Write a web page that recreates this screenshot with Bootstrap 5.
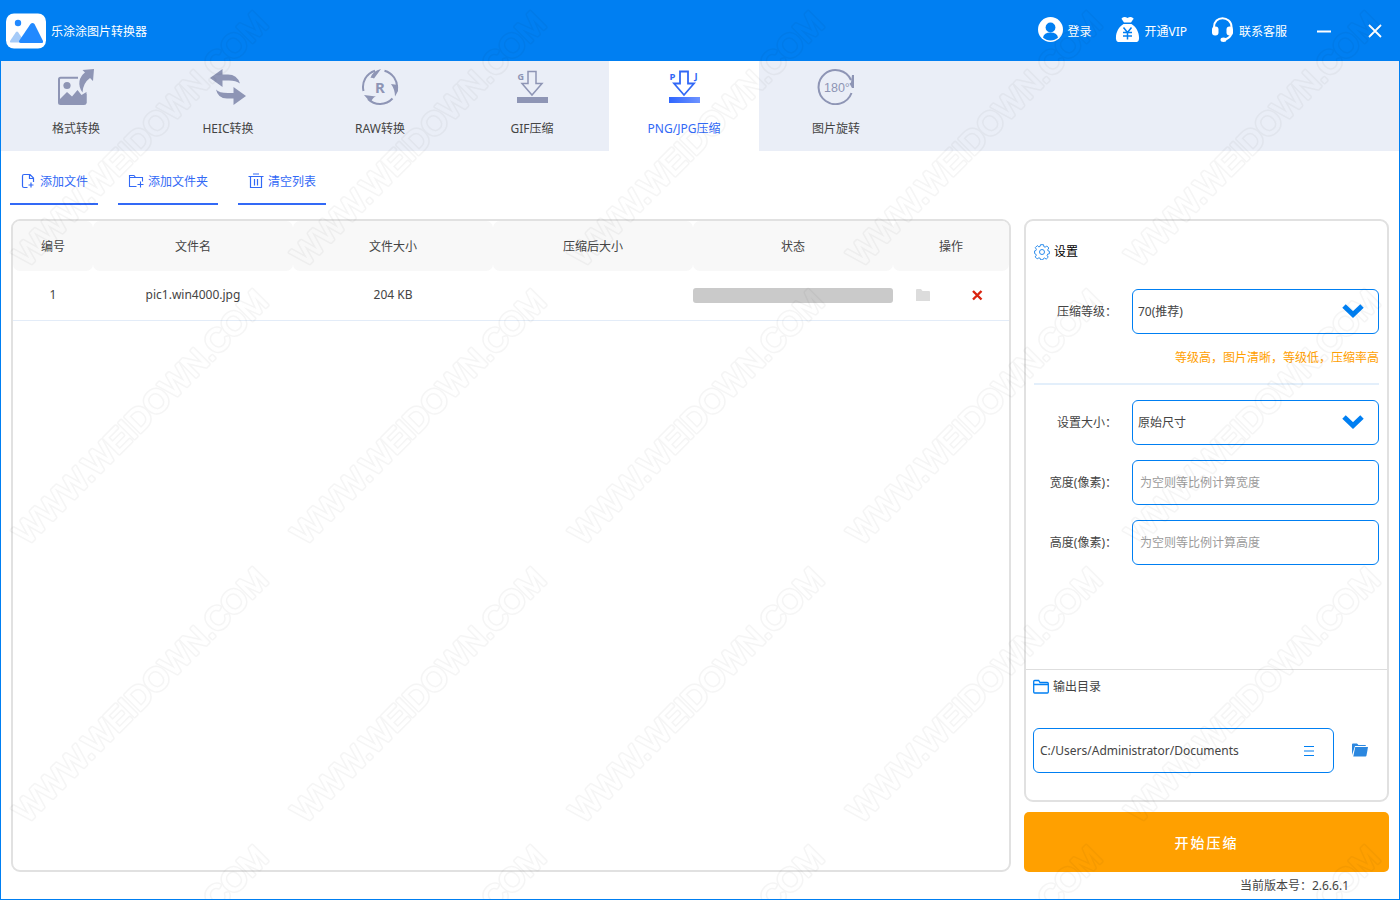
<!DOCTYPE html>
<html lang="zh-CN">
<head>
<meta charset="utf-8">
<meta name="viewport" content="width=device-width, initial-scale=1">
<title>乐涂涂图片转换器</title>
<link href="https://cdn.jsdelivr.net/npm/bootstrap@5.3.0/dist/css/bootstrap.min.css" rel="stylesheet">
<style>
  :root { --brand: #007ff2; --accent: #3269f6; --mute: #8e95b5; }
  body { font: 12px/18px "Noto Sans", "Noto Sans CJK SC", sans-serif; color: #444; background: #fff; }
  button, input, select { font: inherit; color: inherit; }
  svg { display: block; flex: none; }
  .app-window { min-height: 100vh; border: 1px solid var(--brand); border-top: 0; }
  .title-bar { background: var(--brand); height: 61px; padding: 0 17px 0 5px; }
  .title-bar a, .title-bar button { color: #fff; text-decoration: none; }
  .title-bar a span, .app-name, .tool-btn span { padding-top: 2px; }
  .app-name { font-size: 12px; line-height: 18px; margin: 0 auto 0 5px; font-weight: 400; color: #fff; }
  .min-btn { margin: 0 21px 0 14px; }
  .bare { background: none; border: 0; padding: 0; }
  .tab-strip { background: #eaeef7; height: 90px; gap: 2px; }
  .tab-strip .nav-link { width: 150px; padding: 8px 0 0; color: #444; border-radius: 0; gap: 15px; height: 90px; }
  .tab-strip .nav-link svg { color: var(--mute); }
  .tab-strip .nav-link.active { background: #fff; color: var(--accent); }
  .tool-row { padding: 8px 9px 0; gap: 20px; }
  .tool-btn { color: var(--accent); border-bottom: 2px solid var(--accent); height: 46px; padding: 0 10px; gap: 4px; }
  .work-area { padding: 14px 10px 0; gap: 13px; }
  .panel { border: 2px solid #e1e1e1; border-radius: 9px; }
  .list-panel { margin-bottom: 27px; }
  .file-table { table-layout: fixed; width: 100%; text-align: center; }
  .file-table th { font-weight: 400; height: 50px; background: #f8f8f8; border-radius: 7px; padding: 2px 0 0; }
  .file-table td { height: 49px; border-bottom: 1px solid #e3ecf8; padding: 0; }
  .row-actions { padding: 0 25px 0 23px; }
  .file-progress { height: 15px; border-radius: 3px; background: #cacaca; }
  .side { width: 365px; flex: none; }
  .side-title { font-size: 12px; line-height: 18px; padding: 22px 0 28px; margin: 0; font-weight: 400; color: #000; }
  .field-grid { display: grid; grid-template-columns: 98px 1fr; row-gap: 15px; align-items: center; }
  .field-grid label { text-align: right; padding-right: 15px; }
  .field { height: 45px; border: 1px solid var(--brand); border-radius: 6px; padding: 0 7px; width: 100%; background-color: #fff; box-shadow: none; }
  .field::placeholder { color: #9b9b9b; opacity: 1; }
  select.field { appearance: none; padding: 0 40px 0 5px; background-repeat: no-repeat; background-position: right 14px center;
    background-image: url("data:image/svg+xml,%3Csvg xmlns='http://www.w3.org/2000/svg' width='22' height='17' viewBox='0 0 22 17'%3E%3Cpath d='M2 3l9 8.5 9-8.500' fill='none' stroke='%23007ff2' stroke-width='5'/%3E%3C/svg%3E"); }
  .hint { color: #ffa000; margin: 0; padding: 15px 0 16px; }
  .rule { height: 2px; background: #e3effb; margin-bottom: 15px; }
  .output-box { border-top: 1px solid #dedede; padding: 8px 7px 27px; }
  .output-row { margin-top: 32px; }
  .path-input { min-width: 0; margin-left: 6px; }
  .menu-btn { padding: 0 19px; }
  .browse-btn { padding: 0 12px 2px 18px; }
  .start-btn { background: #ffa000; color: #fff; border: 0; border-radius: 5px; height: 60px; font-size: 14px; font-weight: 500; letter-spacing: 2px; margin-top: 10px; padding-top: 3px; }
  .version { padding: 5px 40px 0 0; height: 27px; }
  .watermark { position: absolute; inset: 0; width: 100%; height: 100%; pointer-events: none; }
</style>
</head>
<body>
<div class="app-window d-flex flex-column position-relative">
  <header class="title-bar d-flex align-items-center">
    <svg width="40" height="36" viewBox="0 0 40 36"><rect width="40" height="35" y=".5" rx="8" fill="#fff"/><circle cx="12" cy="10" r="3.200" fill="#2189ff"/><path d="M4 28l6-9q1-1 2 0l6 9q0 1.500-1 1.500H5q-1.500 0-1-1.500z" fill="#a6cbf8"/><path d="M13 28l11.500-17q2-2 4 0L37 28q.5 2-1 2H14.500q-2-.3-1.500-2z" fill="#2189ff"/></svg>
    <h1 class="app-name">乐涂涂图片转换器</h1>
    <nav class="d-flex align-items-center">
      <a href="#" class="d-flex align-items-center gap-1 me-4">
        <svg width="25" height="28" viewBox="0 0 25 28"><circle cx="12.500" cy="12.500" r="12.500" fill="#fff"/><circle cx="12.500" cy="10.500" r="4.900" fill="#007ff2"/><path d="M5 20.500q1-5 7.500-5t7.500 5q-3 3-7.500 3t-7.500-3z" fill="#007ff2"/></svg><span>登录</span></a>
      <a href="#" class="d-flex align-items-center gap-1 me-4">
        <svg width="25" height="28" viewBox="0 0 25 28"><path d="M7 1q2.500-2 5.500 0 3-2 5.500 0 1 .5 0 1.500L16 5.500H9L7 2.500Q6.300 1.600 7 1zM8.500 7h8c5 3 8 9 7.500 15q-.3 3-2 3H3q-1.700 0-2-3C.5 16 3.500 10 8.500 7z" fill="#fff"/><path d="M8.500 10.500l4 5 4-5M12.500 15v7.500M8 15.500h9M8 19h9" fill="none" stroke="#007ff2" stroke-width="1.500"/></svg><span>开通VIP</span></a>
      <a href="#" class="d-flex align-items-center gap-1">
        <svg width="24" height="28" viewBox="0 0 24 28"><path d="M3 11v-1C3 4.500 7 1.200 11.500 1.200S20.500 4.500 20.500 10v1M20.500 16q-1 5.500-7.500 6.500" fill="none" stroke="#fff" stroke-width="2"/><rect x="1" y="9.500" width="6.500" height="9" rx="3" fill="#fff"/><rect x="15.500" y="9.500" width="6.500" height="9" rx="3" fill="#fff"/><ellipse cx="12.500" cy="22.800" rx="3" ry="2.200" fill="#fff"/></svg><span>联系客服</span></a>
    </nav>
    <button class="bare px-3 min-btn" aria-label="最小化"><svg width="14" height="14"><path d="M0 7.500h14" stroke="#fff" stroke-width="2"/></svg></button>
    <button class="bare" aria-label="关闭"><svg width="14" height="14"><path d="M1 1l12 12M13 1L1 13" stroke="#fff" stroke-width="1.800"/></svg></button>
  </header>

  <nav class="tab-strip nav flex-nowrap">
    <a href="#" class="nav-link d-flex flex-column align-items-center">
      <svg width="38" height="36" viewBox="0 0 38 36" fill="currentColor"><path d="M21 8.800H3.500Q2 8.800 2 10.500V33.500Q2 35 3.500 35H27q1.500 0 1.500-1.500V25" fill="none" stroke="currentColor" stroke-width="2"/><circle cx="10" cy="16.500" r="3.600"/><path d="M2 31l8-8 5 4.500 5.500-6.500 4 5 5-3v11l-1 1H3z"/><path d="M25.500 1L37 0 36 12l-3-3q-7 5-7.500 14.500Q21.500 18 22.500 12q1-5 5.500-8.500z"/></svg>格式转换</a>
    <a href="#" class="nav-link d-flex flex-column align-items-center">
      <svg width="36" height="36" viewBox="0 0 36 36" fill="currentColor"><path d="M0 9L12.500 0v5.500H18q9 0 12 9-4-3-11-3h-6.500V18zM36 27L23.500 18v6H18Q9 24 6 20.500q2 9.500 12 9h5.500V36z"/></svg>HEIC转换</a>
    <a href="#" class="nav-link d-flex flex-column align-items-center">
      <svg width="38" height="36" viewBox="0 0 38 36" fill="currentColor"><path d="M2.500 22A17 17 0 0 1 14 1.700M23.500 1.700A17 17 0 0 1 36 20M31.500 29.500A17 17 0 0 1 7 30" fill="none" stroke="currentColor" stroke-width="2"/><path d="M9.500 9Q12 1.500 20 0L13 9.500q-2-1.200-3.500-.5zM30 15l7 1v6l-3 5.500q0-7-4-12.500zM3 26l12 1.500q-3 .5-4.500 4.500-5-2-7.500-6z"/><text x="19" y="24" font-size="15" font-weight="700" text-anchor="middle">R</text></svg>RAW转换</a>
    <a href="#" class="nav-link d-flex flex-column align-items-center">
      <svg width="38" height="36" viewBox="0 0 38 36" fill="currentColor"><path d="M15 2.500h8v12h6l-10 11.500L9 14.500h6z" fill="none" stroke="currentColor" stroke-width="1.500"/><rect x="4" y="28" width="31" height="6"/><text x="4.500" y="11" font-size="9" font-weight="700">G</text></svg>GIF压缩</a>
    <a href="#" class="nav-link active d-flex flex-column align-items-center" aria-current="page">
      <svg width="38" height="36" viewBox="0 0 38 36" fill="#3269f6"><defs><linearGradient id="bar"><stop stop-color="#2f66ff"/><stop offset="1" stop-color="#6e93ff"/></linearGradient></defs><path d="M15 2.500h8v12h6l-10 11.500L9 14.500h6z" fill="none" stroke="#3269f6" stroke-width="1.800"/><rect x="4" y="28" width="31" height="6" fill="url(#bar)"/><text x="4.500" y="11" font-size="9.500" font-weight="700">P</text><text x="29.500" y="10" font-size="9.500" font-weight="700">J</text></svg>PNG/JPG压缩</a>
    <a href="#" class="nav-link d-flex flex-column align-items-center">
      <svg width="38" height="36" viewBox="0 0 38 36" fill="currentColor"><path d="M34.500 24A17 17 0 1 1 34 11" fill="none" stroke="currentColor" stroke-width="2"/><path d="M35 6h2v13h-2l-2.500-4.500 1.500-1z"/><text x="7" y="23" font-size="12.500" font-family="Liberation Sans">180°</text></svg>图片旋转</a>
  </nav>

  <div class="tool-row d-flex">
    <button class="bare tool-btn d-flex align-items-center"><svg width="16" height="16" viewBox="0 0 16 16" fill="none" stroke="currentColor" stroke-width="1.200"><path d="M7.500 14.500H4q-1.500 0-1.500-1.500V3q0-1.500 1.500-1.500h6L13.500 5v4M9.500 1.500v4h4M11 9.500v5M8.500 12h5"/></svg><span>添加文件</span></button>
    <button class="bare tool-btn d-flex align-items-center"><svg width="16" height="16" viewBox="0 0 16 16" fill="none" stroke="currentColor" stroke-width="1.100"><path d="M8.500 13.500h-7V2.500H6L7.500 4.500h7v4M1.500 4.500H8M12.500 8.500v6M9.500 11.500h6"/></svg><span>添加文件夹</span></button>
    <button class="bare tool-btn d-flex align-items-center"><svg width="16" height="16" viewBox="0 0 16 16" fill="none" stroke="currentColor" stroke-width="1.200"><path d="M5 1h6M.5 3.500h15M2.500 3.500v11h11v-11M6.500 6v6.500M9.500 6v6.500"/></svg><span>清空列表</span></button>
  </div>

  <main class="work-area d-flex flex-fill">
    <section class="panel list-panel flex-fill">
      <table class="file-table">
        <colgroup><col style="width:80px"><col><col><col><col><col style="width:116px"></colgroup>
        <thead><tr><th>编号</th><th>文件名</th><th>文件大小</th><th>压缩后大小</th><th>状态</th><th>操作</th></tr></thead>
        <tbody><tr><td>1</td><td>pic1.win4000.jpg</td><td>204 KB</td><td></td>
          <td><div class="file-progress" role="progressbar" aria-label="压缩进度"></div></td>
          <td><div class="row-actions d-flex justify-content-between">
            <button class="bare" aria-label="打开文件夹"><svg width="14" height="14"><path d="M0 2q0-1 1-1h4l1.500 2H13q1 0 1 1v9H0z" fill="#dcdcdc"/></svg></button>
            <button class="bare" aria-label="删除"><svg width="14" height="14"><path d="M3 3l8.500 8.500M11.500 3L3 11.500" stroke="#d9230f" stroke-width="2.400"/></svg></button></div></td></tr></tbody>
      </table>
    </section>

    <aside class="side d-flex flex-column">
      <section class="panel flex-fill d-flex flex-column">
        <div class="px-2 flex-fill">
          <h2 class="side-title d-flex align-items-center gap-1"><svg width="16" height="16" viewBox="0 0 16 16" fill="none" stroke="#2b8ced"><path d="M6.500.7h3l.4 2 1.200.5 1.700-1.200 2 2-1.100 1.800.5 1.200 1.200.3v2.400l-1.700.4-.6 1.300 1.100 1.800-2 1.900-1.700-1.100-1.100.5-.4 1.300H6.600l-.4-1.500-1.300-.5-1.700 1.100-2-2 1.100-1.600-.5-1.200L.6 9.500V6.900l1.300-.4.500-1.200-1.100-1.700 2-2L4.900 2.900l1.200-.5z"/><circle cx="8" cy="8" r="2.500"/></svg>设置</h2>
          <div class="field-grid">
            <label for="level">压缩等级：</label>
            <select id="level" class="field"><option>70(推荐)</option></select>
          </div>
          <p class="hint text-end text-nowrap">等级高，图片清晰，等级低，压缩率高</p>
          <div class="rule"></div>
          <div class="field-grid">
            <label for="size">设置大小：</label>
            <select id="size" class="field"><option>原始尺寸</option></select>
            <label for="w">宽度(像素)：</label>
            <input id="w" class="field" type="text" placeholder="为空则等比例计算宽度">
            <label for="h">高度(像素)：</label>
            <input id="h" class="field" type="text" placeholder="为空则等比例计算高度">
          </div>
        </div>
        <div class="output-box">
          <label for="out" class="d-flex align-items-center gap-1"><svg width="16" height="16" viewBox="0 0 16 16" fill="none" stroke="#007ff2" stroke-width="1.300"><path d="M.7 13V2.500q0-1 1-1h4L7 3.500h7.300q1 0 1 1V13q0 1-1 1H1.700q-1 0-1-1M.7 5.500h14.600"/></svg>输出目录</label>
          <div class="output-row d-flex align-items-center">
            <div class="field d-flex align-items-center flex-fill px-0">
              <input id="out" class="bare path-input flex-fill" type="text" value="C:/Users/Administrator/Documents">
              <button class="bare menu-btn" aria-label="历史目录"><svg width="10" height="12"><path d="M0 1.500h10M0 6h10M0 10.500h10" stroke="#007ff2" stroke-width="1.200"/></svg></button>
            </div>
            <button class="bare browse-btn" aria-label="浏览"><svg width="16" height="14" viewBox="0 0 16 14" fill="#2b87df"><path d="M0 12V1.500q0-1 1-1h4L6.500 2H13q1 0 1 1H3z"/><path d="M3.200 4H16l-1.500 8.500q-.2 1-1 1H1.300z"/></svg></button>
          </div>
        </div>
      </section>
      <button class="start-btn w-100">开始压缩</button>
      <div class="version text-end">当前版本号：2.6.6.1</div>
    </aside>
  </main>

  <svg class="watermark" aria-hidden="true">
    <defs>
      <mask id="ring" maskUnits="userSpaceOnUse" x="-10" y="-40" width="380" height="60">
        <g font-family="Liberation Sans" font-size="32" stroke-linejoin="round">
          <text fill="#fff" stroke="#fff" stroke-width="4">WWW.WEIDOWN.COM</text>
          <text fill="#000" stroke="#000" stroke-width="1">WWW.WEIDOWN.COM</text>
        </g>
      </mask>
      <pattern id="wm" width="278" height="278" patternUnits="userSpaceOnUse">
        <g transform="translate(26 268) rotate(-45)"><rect x="-10" y="-40" width="380" height="60" fill="#000" fill-opacity=".038" mask="url(#ring)"/></g>
      </pattern>
    </defs>
    <rect width="100%" height="100%" fill="url(#wm)"/>
  </svg>
</div>
<script src="https://cdn.jsdelivr.net/npm/bootstrap@5.3.0/dist/js/bootstrap.bundle.min.js"></script>
</body>
</html>
